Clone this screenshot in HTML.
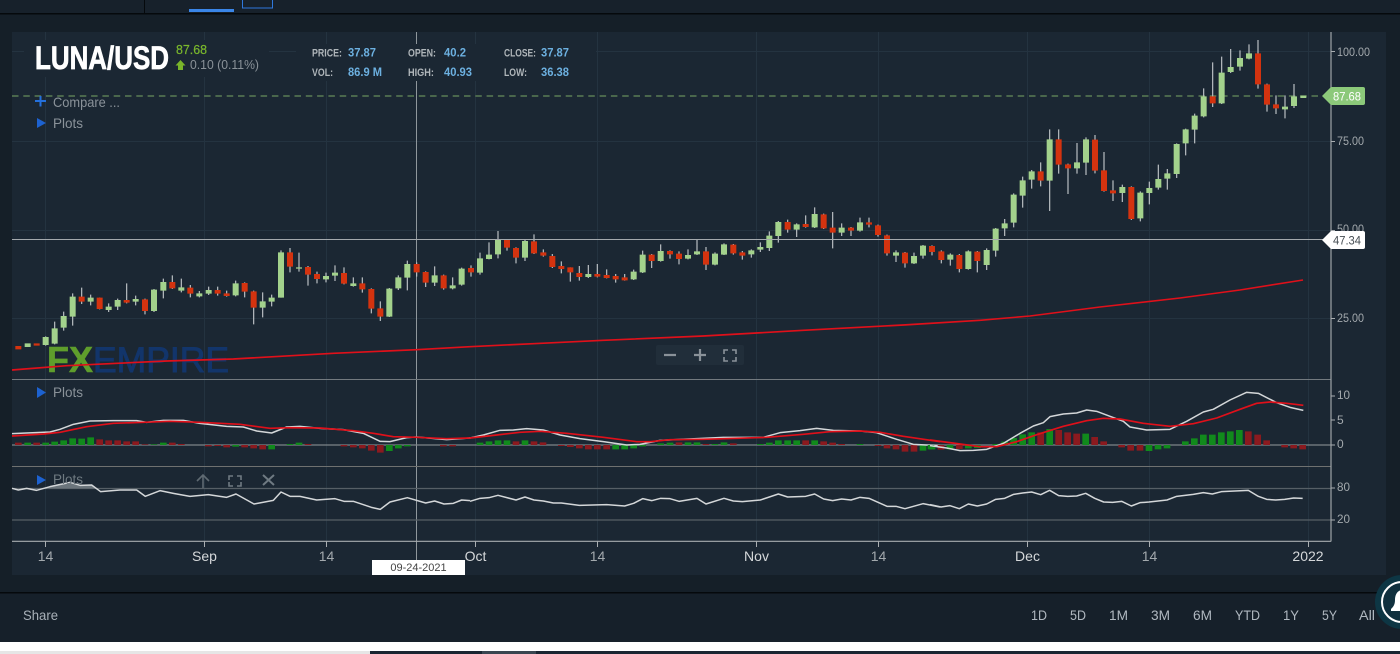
<!DOCTYPE html>
<html><head><meta charset="utf-8"><title>LUNA/USD</title>
<style>
html,body{margin:0;padding:0;width:1400px;height:654px;overflow:hidden;background:#151f28}
svg{display:block}
text{font-family:"Liberation Sans",sans-serif}
.w{fill:none;stroke:#b9bec2;stroke-width:3.6}
.g{fill:none;stroke:#a3d28c;stroke-width:18}
.r{fill:none;stroke:#d4330f;stroke-width:18}
.hg{fill:none;stroke:#118a1c;stroke-width:20}
.hr{fill:none;stroke:#8b1a1f;stroke-width:20}
.lw{fill:none;stroke:#d4d7d9;stroke-width:4.5;stroke-linejoin:round}
.lr{fill:none;stroke:#e0101a;stroke-width:5;stroke-linejoin:round}
.ax{fill:#a3a9ad;font-size:12px}
.xd{fill:#a3a9ad;font-size:14px;text-anchor:middle}
.xm{fill:#d5d8da;font-size:14px;text-anchor:middle}
.sl{fill:#b0b6ba;font-size:11px;font-weight:bold}
.sv{fill:#6cb0e0;font-size:11.5px;font-weight:bold}
.b{fill:#b0b8c0;font-size:14px}
</style></head><body>
<svg width="1400" height="654" viewBox="0 0 1400 654" xmlns="http://www.w3.org/2000/svg">
<rect width="1400" height="654" fill="#151f28"/>
<rect width="1400" height="13" fill="#17212b"/>
<rect y="13" width="1400" height="1.5" fill="#05090c"/>
<rect x="144" y="0" width="1" height="13" fill="#05090c"/>
<rect x="189" y="9" width="45" height="3" fill="#3a86e8"/>
<rect x="242.5" y="-2" width="30" height="10" fill="none" stroke="#2f78dc"/>
<rect x="12" y="32" width="1374" height="543" fill="#1b2733"/>

<!-- grid -->
<path d="M12 51.500H1331M12 141.500H1331M12 230.500H1331M12 318.500H1331" stroke="#243340" fill="none"/>
<path d="M45.500 32V541M204.500 32V541M326.500 32V541M475.500 32V541M597.500 32V541M756.500 32V541M878.500 32V541M1027.500 32V541M1149.500 32V541M1308.500 32V541" stroke="#243340" fill="none"/>
<!-- crosshair vertical -->
<path d="M416.500 32V561" stroke="#8f979c" fill="none"/>
<!-- header mask -->
<rect x="24" y="40" width="245" height="37" fill="#1b2733"/>
<rect x="296" y="44" width="300" height="37" fill="#1b2733"/>

<!-- separators -->
<path d="M12 379.500H1331" stroke="#737a7f" stroke-width="1.100"/>
<path d="M12 466.500H1331" stroke="#6f7170" stroke-width="1.100"/>
<path d="M12 445H1331" stroke="#7d8489" stroke-width="1.200"/>
<path d="M12 488.500H1331M12 520H1331" stroke="#565f66" stroke-width="1.200"/>
<path d="M12 541.300H1331" stroke="#a9aeb1" stroke-width="1.200"/>
<path d="M1331 32V541.500" stroke="#9ea4a8" stroke-width="1.200"/>
<path d="M45.500 541V547M204.500 541V547M326.500 541V547M475.500 541V547M597.500 541V547M756.500 541V547M878.500 541V547M1027.500 541V547M1149.500 541V547M1308.500 541V547" stroke="#a9aeb1" fill="none"/>
<path d="M1331 51.500H1335M1331 141.500H1335M1331 230.500H1335M1331 318.500H1335M1331 396H1335M1331 420H1335M1331 445H1335M1331 488H1335M1331 520H1335" stroke="#a9aeb1" fill="none"/>

<!-- dashed price -->
<path d="M12 96H1322" stroke="#5b7d55" stroke-width="1.500" stroke-dasharray="6.500 4.800" fill="none"/>

<!-- logo -->
<text x="47" y="372" font-size="36" font-weight="bold" fill="#5f9e2c" stroke="#5f9e2c" stroke-width=".6" textLength="46" lengthAdjust="spacingAndGlyphs">FX</text>
<text x="93" y="372" font-size="35" fill="#12356b" stroke="#12356b" stroke-width=".9" textLength="136" lengthAdjust="spacingAndGlyphs">EMPIRE</text>

<!-- moving average -->
<g transform="translate(0 220) scale(.33333)"><path class="lr" d="M36 450L200 437L500 423L700 417L1000 400L1250 389L1410 380"/></g>
<g transform="translate(470 190) scale(.33333)"><path class="lr" d="M0 470L190 461L400 451L700 438L1000 421L1300 405L1530 391"/></g>
<path d="M980 320.300L1030 316L1100 307L1180 298L1240 290L1303 280" fill="none" stroke="#e0101a" stroke-width="1.600"/>

<!-- candles A: x=z/3, y=220+z/3 -->
<g transform="translate(0 220) scale(.33333)">
<path class="w" d="M137 349V377M164 305V373M191 275V332M218 220V317M245 203V252M272 224V256M299 233V268M326 250V276M353 236V270M380 190V250M407 227V256M435 236V283M462 207V276M490 176V235M517 166V207M544 176V217M571 195V232M598 213V232M626 200V225M653 200V227M680 212V230M707 182V229M734 187V232M761 212V313M788 217V292M815 224V259M843 91V233M870 84V157M897 98V155M924 138V197M951 155V190M978 158V187M1005 136V183M1032 142V193M1060 172V200M1087 172V218M1114 205V280M1141 244V303M1168 204V291M1195 166V210M1222 122V211M1250 127V170M1277 154V201M1304 139V198M1331 164V209M1358 172V208M1385 143V197"/>
<path class="g" d="M83 370V381M137 351V375M164 325V371M191 288V323M218 230V290M272 233V245M326 260V270M353 240V260M407 237V245M462 209V273M490 186V212M544 202V212M598 220V229M626 210V221M707 190V226M788 244V263M815 233V245M843 97V233M897 142V146M978 168V178M1005 158V167M1060 190V198M1168 206V290M1195 172V205M1222 132V173M1304 166V188M1358 196V205M1385 146V194"/>
<path class="r" d="M55 378V388M110 370V377M245 230V245M299 233V267M380 240V248M435 238V273M517 186V205M571 203V221M653 210V221M680 220V228M734 189V215M761 214V263M870 97V140M924 141V164M951 162V177M1032 159V191M1087 190V208M1114 207V266M1141 265V290M1250 132V157M1277 156V188M1331 166V205"/>
</g>
<!-- candles B: x=470+z/3, y=190+z/3 -->
<g transform="translate(470 190) scale(.33333)">
<path class="w" d="M3 226V260M30 188V254M57 157V208M84 123V205M111 148V182M138 172V220M165 148V213M192 133V192M220 178V200M247 192V234M274 214V250M301 232V275M328 228V272M355 225V264M382 222V262M410 238V265M437 252V278M464 252V272M491 239V270M518 182V249M545 192V234M572 163V215M600 181V206M627 184V223M654 178V208M681 150V195M708 171V240M735 187V226M762 160V195M790 162V194M817 183V209M844 178V203M871 157V186M898 124V183M925 93V158M953 89V128M980 100V141M1007 76V113M1034 52V114M1061 71V117M1088 66V175M1115 100V138M1143 111V138M1170 83V125M1197 83V112M1224 104V140M1251 134V197M1278 181V216M1305 186V233M1332 188V222M1359 165V206M1386 166V196M1414 181V220M1441 190V227M1468 192V247M1495 181V239M1522 183V247"/>
<path class="g" d="M30 205V248M57 194V207M84 150V193M165 153V203M355 252V261M491 245V268M518 194V247M572 183V213M654 195V206M681 184V193M735 191V224M762 163V194M844 181V193M871 171V179M898 137V174M925 96V138M980 103V119M1034 72V112M1115 113V128M1170 97V122M1278 187V197M1332 198V220M1359 167V197M1441 194V209M1495 184V237"/>
<path class="r" d="M3 234V247M111 150V173M138 174V203M192 154V190M220 187V197M247 198V231M274 228V237M301 232V247M328 249V261M382 252V260M410 255V264M437 258V268M464 262V271M545 194V213M600 183V193M627 191V207M708 184V224M790 164V190M817 187V197M953 96V119M1007 102V111M1061 73V115M1088 113V128M1143 113V122M1197 97V104M1224 106V135M1251 136V190M1305 188V220M1386 168V186M1414 184V210M1468 195V237M1522 185V213"/>
</g>
<!-- candles C: x=980+z/3, y=20+z/3 -->
<g transform="translate(980 20) scale(.33333)">
<path class="w" d="M20 685V750M47 624V710M74 597V648M101 520V622M128 470V563M155 450V506M182 427V499M209 328V573M236 328V461M264 431V522M291 369V461M318 352V465M345 345V460M372 396V515M399 481V543M427 494V546M454 499V600M481 514V604M508 485V553M535 434V509M562 447V509M590 370V474M617 326V406M644 281V370M671 205V292M698 127V261M725 110V252M752 87V159M780 91V152M807 73V118M834 60V206M861 191V275M888 226V282M915 226V295M942 192V264"/>
<path class="g" d="M20 690V735M47 626V692M74 610V625M101 524V608M128 481V527M155 454V479M209 358V482M291 427V445M318 358V428M427 501V519M481 518V595M508 504V519M535 477V503M562 460V476M590 372V462M617 328V370M644 287V329M671 229V289M725 158V250M752 141V156M780 114V140M807 100V116M915 260V268M942 229V258M970 227V234"/>
<path class="r" d="M182 454V482M236 358V434M264 433V445M345 359V452M372 451V513M399 511V520M454 501V597M698 229V250M834 100V193M861 193V254M888 253V265"/>
</g>

<!-- MACD A -->
<g transform="translate(0 380) scale(.33333)">
<path class="hr" d="M55 195V188M110 195V188M299 195V178M326 195V181M353 195V181M380 195V184M407 195V184M435 195V193M517 195V188M544 195V192M625 195V199M653 195V198M680 195V202M734 195V202M761 195V205M788 195V208M924 195V192M1032 195V199M1060 195V202M1087 195V205M1114 195V212M1141 195V218M1330 195V199M1358 195V199"/>
<path class="hg" d="M83 195V188M137 195V188M164 195V185M191 195V181M218 195V175M245 195V176M272 195V172M462 195V193M490 195V188M707 195V200M815 195V208M870 195V192M897 195V188M1168 195V213M1195 195V205M1222 195V199"/>
<path class="lw" d="M36 161L150 156L180 148L220 133L270 123L340 122L410 122L440 127L490 121L550 121L600 130L680 139L730 141L770 153L815 159L860 141L900 139L960 145L1030 149L1090 160L1140 184L1170 185L1220 173L1250 171L1340 179L1410 174"/>
<path class="lr" d="M36 168L130 162L180 157L260 140L340 130L430 127L510 124L600 127L720 133L810 145L870 143L960 144L1060 152L1120 160L1180 170L1250 172L1340 176L1410 174"/>
<path d="M135 325L210 307L240 316L275 315L287 325Z" fill="#6b757c"/>
<path class="lw" d="M36 325L55 330L80 325L110 331L150 320L210 307L240 316L275 315L302 335L360 330L410 330L436 349L480 332L520 340L570 349L625 344L680 352L708 342L762 372L820 361L843 336L870 349L900 349L950 360L1005 356L1032 364L1060 364L1114 382L1141 388L1170 366L1222 353L1277 369L1304 363L1332 372L1360 370L1385 360L1410 362"/>
</g>
<!-- MACD B -->
<g transform="translate(470 380) scale(.33333)">
<path class="hr" d="M138 195V184M192 195V184M219 195V187M274 195V198M301 195V201M328 195V205M355 195V208M382 195V208M410 195V208M627 195V187M708 195V192M790 195V190M1007 195V181M1061 195V184M1088 195V188M1115 195V192M1224 195V198M1251 195V205M1278 195V208M1305 195V215M1332 195V215"/>
<path class="hg" d="M30 195V188M57 195V184M84 195V181M111 195V181M165 195V181M437 195V208M464 195V208M491 195V205M518 195V199M572 195V190M600 195V188M654 195V187M681 195V187M735 195V192M762 195V187M871 195V192M898 195V188M925 195V181M953 195V181M980 195V181M1034 195V181M1170 195V192M1359 195V212M1386 195V208"/>
<path class="lw" d="M0 174L40 165L90 151L130 150L170 146L220 150L270 165L330 176L400 185L470 195L510 193L570 181L680 176L760 172L880 172L930 158L990 152L1040 145L1090 151L1170 153L1220 158L1280 178L1330 193L1410 197"/>
<path class="lr" d="M0 174L80 165L150 157L210 154L290 160L400 172L500 185L540 185L600 179L700 178L800 175L890 172L1000 163L1080 155L1170 153L1230 157L1300 169L1410 185"/>
<path class="lw" d="M0 364L30 355L57 353L84 346L138 360L165 351L192 360L220 363L250 369L274 369L328 376L410 374L464 378L491 370L518 356L545 362L572 355L600 356L627 364L681 355L708 372L762 355L790 363L817 365L871 360L925 342L953 351L1007 349L1034 342L1061 357L1088 362L1115 357L1143 360L1170 352L1197 355L1224 367L1251 379L1278 379L1305 386L1359 371L1410 381"/>
</g>
<!-- MACD C -->
<g transform="translate(930 380) scale(.33333)">
<path class="hr" d="M33 195V209M88 195V207M332 195V157M386 195V150M413 195V157M440 195V161M494 195V171M521 195V184M575 195V202M602 195V212M630 195V212M955 195V154M983 195V164M1010 195V181M1064 195V202M1091 195V205M1118 195V208"/>
<path class="hg" d="M3 195V208M60 195V208M115 195V205M142 195V204M197 195V192M224 195V185M251 195V174M278 195V163M305 195V157M359 195V147M467 195V161M657 195V213M684 195V208M711 195V205M766 195V184M793 195V175M820 195V164M847 195V164M874 195V157M901 195V154M928 195V150"/>
<path class="lw" d="M0 197L50 204L90 212L130 211L170 208L220 190L270 160L310 138L340 128L360 110L400 102L440 99L470 90L500 94L540 109L580 124L600 141L650 150L720 148L770 124L820 96L850 88L900 60L950 37L985 40L1040 68L1080 82L1120 91"/>
<path class="lr" d="M0 180L90 192L150 200L200 200L260 185L320 164L400 139L470 122L520 115L570 117L640 130L720 139L790 131L860 114L930 88L980 70L1020 66L1070 70L1120 76"/>
<path class="lw" d="M0 374L33 381L60 377L88 386L115 372L142 378L170 372L197 358L224 355L251 343L278 339L305 336L332 344L359 331L386 347L413 349L440 348L467 340L494 355L521 366L548 367L575 364L604 378L630 368L657 366L711 360L740 349L790 343L820 338L847 342L874 335L955 331L985 349L1010 358L1037 360L1064 358L1091 354L1118 355"/>
</g>

<!-- crosshair horizontal -->
<path d="M12 239.500H1331" stroke="#a4a9ad" stroke-width="1.100"/>

<!-- Header -->
<text x="35" y="69" font-size="32" font-weight="bold" fill="#fff" stroke="#fff" stroke-width=".7" textLength="134" lengthAdjust="spacingAndGlyphs">LUNA/USD</text>
<text x="176" y="54" font-size="13" fill="#7ab82c" stroke="#7ab82c" stroke-width=".2" textLength="31" lengthAdjust="spacingAndGlyphs">87.68</text>
<path d="M180.500 60L185.500 65.500H183V70H178V65.500H175.500Z" fill="#79b52a"/>
<text x="190" y="69" font-size="13" fill="#8a9299" textLength="69" lengthAdjust="spacingAndGlyphs">0.10 (0.11%)</text>
<text class="sl" x="312" y="56.500" textLength="30" lengthAdjust="spacingAndGlyphs">PRICE:</text>
<text class="sv" x="348" y="56.500" textLength="28" lengthAdjust="spacingAndGlyphs">37.87</text>
<text class="sl" x="312" y="76" textLength="21" lengthAdjust="spacingAndGlyphs">VOL:</text>
<text class="sv" x="348" y="76" textLength="34" lengthAdjust="spacingAndGlyphs">86.9 M</text>
<text class="sl" x="408" y="56.500" textLength="28" lengthAdjust="spacingAndGlyphs">OPEN:</text>
<text class="sv" x="444" y="56.500" textLength="22" lengthAdjust="spacingAndGlyphs">40.2</text>
<text class="sl" x="408" y="76" textLength="26" lengthAdjust="spacingAndGlyphs">HIGH:</text>
<text class="sv" x="444" y="76" textLength="28" lengthAdjust="spacingAndGlyphs">40.93</text>
<text class="sl" x="504" y="56.500" textLength="32" lengthAdjust="spacingAndGlyphs">CLOSE:</text>
<text class="sv" x="541" y="56.500" textLength="28" lengthAdjust="spacingAndGlyphs">37.87</text>
<text class="sl" x="504" y="76" textLength="23" lengthAdjust="spacingAndGlyphs">LOW:</text>
<text class="sv" x="541" y="76" textLength="28" lengthAdjust="spacingAndGlyphs">36.38</text>

<!-- Controls -->
<path d="M35 101H46M40.500 96V106.500" stroke="#2470dc" stroke-width="2" fill="none"/>
<text x="53" y="107" font-size="14" fill="#8a9299" textLength="67" lengthAdjust="spacingAndGlyphs">Compare ...</text>
<path d="M37 118L46 123L37 128Z" fill="#1d62d0"/>
<text x="53" y="128" font-size="14" fill="#8a9299" textLength="30" lengthAdjust="spacingAndGlyphs">Plots</text>
<path d="M37 387L46 392.500L37 398Z" fill="#1d62d0"/>
<text x="53" y="397" font-size="14" fill="#8a9299" textLength="30" lengthAdjust="spacingAndGlyphs">Plots</text>
<path d="M37 475L46 480L37 485Z" fill="#1d62d0"/>
<text x="53" y="484" font-size="14" fill="#6f7a81" textLength="30" lengthAdjust="spacingAndGlyphs">Plots</text>
<path d="M203 488V475M197 481L203 475L209 481" stroke="#5f6a72" stroke-width="1.600" fill="none"/>
<path d="M229 480V476H233M237 476H241V480M241 482V486H237M233 486H229V482" stroke="#6f7a82" stroke-width="1.600" fill="none"/>
<path d="M263 475L274 485M274 475L263 485" stroke="#6f7a82" stroke-width="2" fill="none"/>

<!-- zoom widget -->
<rect x="656" y="345" width="88" height="20" rx="2" fill="#212e3a"/>
<path d="M664 355H676M694 355H706M700 349V361" stroke="#8a9299" stroke-width="2.200" fill="none"/>
<path d="M724 354V350H728M732 350H736V354M736 357V361H732M728 361H724V357" stroke="#8a9299" stroke-width="1.600" fill="none"/>

<!-- Axis labels -->
<text class="ax" x="1337" y="56" textLength="33" lengthAdjust="spacingAndGlyphs">100.00</text>
<text class="ax" x="1337" y="145" textLength="27" lengthAdjust="spacingAndGlyphs">75.00</text>
<text class="ax" x="1337" y="233" textLength="27" lengthAdjust="spacingAndGlyphs">50.00</text>
<text class="ax" x="1337" y="322" textLength="27" lengthAdjust="spacingAndGlyphs">25.00</text>
<text class="ax" x="1337" y="399" textLength="13" lengthAdjust="spacingAndGlyphs">10</text>
<text class="ax" x="1337" y="424">5</text>
<text class="ax" x="1337" y="448">0</text>
<text class="ax" x="1337" y="491" textLength="13" lengthAdjust="spacingAndGlyphs">80</text>
<text class="ax" x="1337" y="523" textLength="13" lengthAdjust="spacingAndGlyphs">20</text>

<!-- Price tags -->
<path d="M1322 96L1331 87H1363Q1365 87 1365 89V103Q1365 105 1363 105H1331Z" fill="#8cc97a"/>
<text x="1333" y="100.500" font-size="12" fill="#fff" textLength="28" lengthAdjust="spacingAndGlyphs">87.68</text>
<path d="M1322 240L1331 231H1363Q1365 231 1365 233V247Q1365 249 1363 249H1331Z" fill="#fff"/>
<text x="1333" y="244.500" font-size="12" fill="#444c52" textLength="28" lengthAdjust="spacingAndGlyphs">47.34</text>

<!-- X labels -->
<text class="xd" x="45.500" y="561">14</text>
<text class="xm" x="204.500" y="561">Sep</text>
<text class="xd" x="326.500" y="561">14</text>
<text class="xm" x="475.500" y="561">Oct</text>
<text class="xd" x="597.500" y="561">14</text>
<text class="xm" x="756.500" y="561">Nov</text>
<text class="xd" x="878.500" y="561">14</text>
<text class="xm" x="1027.500" y="561">Dec</text>
<text class="xd" x="1149.500" y="561">14</text>
<text class="xm" x="1308" y="561">2022</text>
<rect x="372" y="560" width="93" height="15" fill="#fff"/>
<text x="418.500" y="571" font-size="11" fill="#444" text-anchor="middle">09-24-2021</text>

<!-- bottom bar -->
<rect y="592" width="1400" height="1.500" fill="#05090c"/>
<rect y="593.500" width="1400" height="48.500" fill="#16202a"/>
<text x="23" y="620" font-size="14" fill="#a8b0b8" textLength="35" lengthAdjust="spacingAndGlyphs">Share</text>
<text class="b" x="1031" y="620" textLength="16" lengthAdjust="spacingAndGlyphs">1D</text>
<text class="b" x="1070" y="620" textLength="16" lengthAdjust="spacingAndGlyphs">5D</text>
<text class="b" x="1109" y="620" textLength="19" lengthAdjust="spacingAndGlyphs">1M</text>
<text class="b" x="1151" y="620" textLength="19" lengthAdjust="spacingAndGlyphs">3M</text>
<text class="b" x="1193" y="620" textLength="19" lengthAdjust="spacingAndGlyphs">6M</text>
<text class="b" x="1235" y="620" textLength="25" lengthAdjust="spacingAndGlyphs">YTD</text>
<text class="b" x="1283" y="620" textLength="16" lengthAdjust="spacingAndGlyphs">1Y</text>
<text class="b" x="1322" y="620" textLength="15" lengthAdjust="spacingAndGlyphs">5Y</text>
<text class="b" x="1359" y="620" textLength="16" lengthAdjust="spacingAndGlyphs">All</text>

<!-- bell -->
<circle cx="1402" cy="602" r="27" fill="#0d3644"/>
<circle cx="1402" cy="602" r="20" fill="#10303e" stroke="#fff" stroke-width="2"/>
<path d="M1403 590C1397 590 1395 595 1395 600C1395 605 1393 607 1391 609V611H1403Z" fill="#fff"/>

<!-- bottom strip -->
<rect y="642" width="1400" height="9" fill="#fff"/>
<rect y="651" width="370" height="3" fill="#e6e6e6"/>
<rect x="370" y="651" width="1030" height="3" fill="#1a2632"/>
<rect x="482" y="651" width="54" height="3" fill="#3a4651"/>
</svg>
</body></html>
